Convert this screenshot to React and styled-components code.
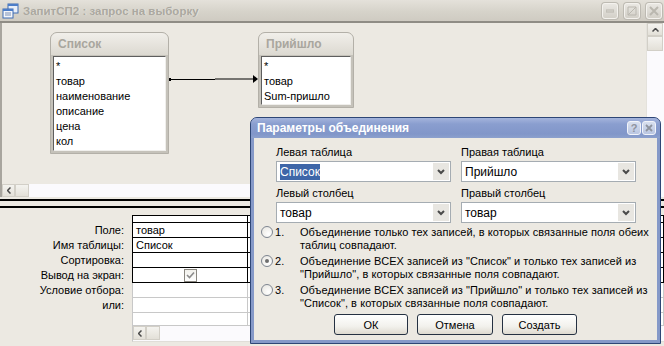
import React from 'react'
import styled, { createGlobalStyle, css } from 'styled-components'

const GlobalStyle = createGlobalStyle`
  html, body { margin: 0; padding: 0; }
  body {
    font-family: "Liberation Sans", Arial, sans-serif;
    font-size: 11px;
    color: #000;
    background: #ECE9E2;
  }
`

const Window = styled.div`
  position: relative;
  width: 664px;
  height: 346px;
  overflow: hidden;
  background: #ECE9E2;
  display: flex;
  flex-direction: column;
`

const TitleBar = styled.div`
  flex: none;
  height: 21px;
  display: flex;
  align-items: center;
  gap: 4px;
  padding: 0 2px 0 2px;
  background: linear-gradient(#E4E1DA, #D6D3CA 55%, #CFCBC2);
  border-bottom: 2px solid #8F8C85;
`

const TitleText = styled.div`
  flex: 1;
  font-size: 11.5px;
  font-weight: bold;
  color: #ABA8A0;
  text-shadow: 1px 0 0 #E6E4DE;
`

const CaptionButton = styled.div`
  width: 14px;
  height: 14px;
  border: 1px solid #F4F2EE;
  border-radius: 3px;
  background: linear-gradient(#E9E7E2, #D3D0C8);
  box-shadow: 0 0 0 1px #BDBAB2;
  display: flex;
  align-items: center;
  justify-content: center;
  margin-left: 2px;
`

const UpperPane = styled.div`
  flex: none;
  height: 161px;
  display: flex;
  border-left: 2px solid #A8A59E;
`

const Canvas = styled.div`
  position: relative;
  flex: 1;
`

const VScroll = styled.div`
  width: 17px;
  display: flex;
  flex-direction: column;
  background: #FBFAFD;
  border-left: 1px solid #E4E2DC;
`

const ScrollButton = styled.div`
  width: ${p => p.$w || 16}px;
  height: ${p => p.$h || 13}px;
  flex: none;
  background: linear-gradient(#F4F3EF, #E3E0D8);
  border: 1px solid #D2CFC7;
  box-sizing: border-box;
  display: flex;
  align-items: center;
  justify-content: center;
`

const HScroll = styled.div`
  flex: none;
  height: 13px;
  display: flex;
  background: #FBFAFD;
  border-left: 2px solid #A8A59E;
`

const Splitter = styled.div`
  flex: none;
  height: 5px;
  margin-top: 2px;
  border-top: 2px solid #000;
  border-bottom: 2px solid #000;
  background: #ECE9E2;
`

const TableBox = styled.div`
  position: absolute;
  left: ${p => p.$x}px;
  top: ${p => p.$y}px;
  width: ${p => p.$w}px;
  height: ${p => p.$h}px;
  box-sizing: border-box;
  border: 1px solid #B3B0A8;
  border-radius: 7px 7px 0 0;
  background: #C5C2BA;
  display: flex;
  flex-direction: column;
  padding: 0 2px 2px;
`

const TableHead = styled.div`
  height: 22px;
  margin: 0 -2px;
  border-radius: 6px 6px 0 0;
  background: linear-gradient(#F1EFEA, #DCD9D1);
  padding-left: 7px;
  line-height: 23px;
  font-size: 12px;
  font-weight: bold;
  color: #A9A69E;
  border-bottom: 1px solid #C5C2BA;
`

const FieldList = styled.div`
  flex: 1;
  background: #fff;
  border-top: 1px solid #5E5E5E;
  border-left: 1px solid #5E5E5E;
  border-right: 1px solid #F0EFEC;
  border-bottom: 1px solid #F0EFEC;
  padding: 2px 0 0 2px;
`

const FieldItem = styled.div`
  height: 15px;
  line-height: 15px;
  white-space: nowrap;
`

const LowerPane = styled.div`
  flex: 1;
  padding-top: 7px;
`

const GridRow = styled.div`
  display: flex;
  height: ${p => p.$h || 15}px;
`

const RowLabel = styled.div`
  width: 132px;
  box-sizing: border-box;
  padding-right: 8px;
  text-align: right;
  line-height: 15px;
  white-space: nowrap;
`

const GridCell = styled.div`
  box-sizing: border-box;
  width: ${p => (p.$w ? `${p.$w}px` : 'auto')};
  flex: ${p => (p.$w ? 'none' : 1)};
  background: #fff;
  border-bottom: 1px solid ${p => (p.$strong ? '#000' : '#C8C8C8')};
  border-right: 1px solid ${p => (p.$strong ? '#000' : '#C8C8C8')};
  padding-left: 3px;
  line-height: 14px;
  display: flex;
  align-items: center;
  ${p => p.$first && css`border-left: 1px solid ${p.$strong ? '#000' : '#C8C8C8'};`}
  ${p => p.$top && css`border-top: 1px solid #000;`}
  ${p => p.$center && css`justify-content: center; padding-left: 0;`}
`

const GridScroll = styled.div`
  display: flex;
  margin-left: 132px;
  height: 15px;
  background: #FBFAFD;
  border-left: 1px solid #C8C8C8;
  border-bottom: 1px solid #E0DED8;
`

const CheckBox = styled.div`
  width: 13px;
  height: 13px;
  box-sizing: border-box;
  border: 1px solid #8A8780;
  background: linear-gradient(#F2F1EC, #FFFFFF);
  display: flex;
  align-items: center;
  justify-content: center;
`

const Dialog = styled.div`
  position: absolute;
  left: 250px;
  top: 117px;
  width: 411px;
  height: 227px;
  box-sizing: border-box;
  border: 1px solid #2E4676;
  border-radius: 7px 7px 0 0;
  background: #8599C8;
  display: flex;
  flex-direction: column;
`

const DialogTitle = styled.div`
  flex: none;
  height: 20px;
  display: flex;
  align-items: center;
  padding: 0 4px 0 6px;
  border-radius: 6px 6px 0 0;
  background: linear-gradient(#A4B4DC, #8A9ECF 30%, #8196C9 80%, #8CA0CD);
  color: #fff;
  font-size: 12px;
  font-weight: bold;
`

const DialogCaption = styled.div`
  flex: 1;
`

const DialogButtonIcon = styled.div`
  width: 12px;
  height: 12px;
  border: 1px solid #F2F4FA;
  border-radius: 3px;
  background: linear-gradient(#D8DFEE, #BAC6E2);
  display: flex;
  align-items: center;
  justify-content: center;
  margin-left: 1px;
  color: #8E939E;
  font-size: 11px;
  font-weight: bold;
  line-height: 12px;
`

const DialogBody = styled.div`
  flex: 1;
  margin: 0 3px 3px;
  background: #ECE9E2;
  padding: 6px 0 0 7px;
  display: flex;
  flex-direction: column;
`

const FieldGrid = styled.div`
  display: grid;
  grid-template-columns: 175px 175px;
  column-gap: 10px;
  row-gap: 3px;
  margin-left: 15px;
`

const Field = styled.div`
  display: flex;
  flex-direction: column;
`

const FieldLabel = styled.div`
  height: 17px;
  line-height: 17px;
  font-size: 11px;
`

const Combo = styled.div`
  height: 21px;
  box-sizing: border-box;
  border: 1px solid #A5ACB2;
  background: #fff;
  display: flex;
  align-items: stretch;
  padding: 1px;
`

const ComboValue = styled.div`
  flex: 1;
  display: flex;
  align-items: center;
  padding-left: 2px;
  font-size: 12px;
`

const Selected = styled.span`
  background: ${p => (p.$on ? '#3E66A8' : 'transparent')};
  color: ${p => (p.$on ? '#fff' : '#000')};
  padding: 1px 0;
  line-height: 14px;
`

const ComboArrow = styled.div`
  width: 16px;
  background: #E8E6E1;
  display: flex;
  align-items: center;
  justify-content: center;
`

const Options = styled.div`
  margin-top: 3px;
  display: flex;
  flex-direction: column;
  gap: 3px;
`

const Option = styled.div`
  display: flex;
  align-items: flex-start;
  line-height: 13px;
  font-size: 11px;
`

const Radio = styled.div`
  flex: none;
  width: 12px;
  height: 12px;
  box-sizing: border-box;
  border-radius: 50%;
  border: 1px solid #7E8590;
  background: radial-gradient(circle at 65% 70%, #FFFFFF, #E6E4DE);
  display: flex;
  align-items: center;
  justify-content: center;
  &::after {
    content: '';
    width: 4px;
    height: 4px;
    border-radius: 50%;
    background: ${p => (p.$checked ? '#6E6E6E' : 'transparent')};
  }
`

const OptionNum = styled.div`
  width: 25px;
  flex: none;
  padding-left: 2px;
`

const OptionText = styled.div`
  white-space: nowrap;
  letter-spacing: 0.06px;
`

const ButtonRow = styled.div`
  display: flex;
  justify-content: center;
  gap: 9px;
  margin-top: 4px;
  padding-right: 7px;
`

const PushButton = styled.div`
  width: ${p => p.$w || 75}px;
  height: 21px;
  box-sizing: border-box;
  border: 1px solid #253142;
  border-radius: 3px;
  background: linear-gradient(#FFFFFF, #F2F1EC 60%, #DEDAD0);
  display: flex;
  align-items: center;
  justify-content: center;
  font-size: 11px;
`

const Chevron = () => (
  <svg width="8" height="6" viewBox="0 0 8 6">
    <path d="M1 1 L4 4 L7 1" fill="none" stroke="#4A4A4A" strokeWidth="2" />
  </svg>
)

const WindowIcon = () => (
  <svg width="17" height="16" viewBox="0 0 17 16">
    <rect x="6" y="1" width="10" height="9" fill="#E8EEF8" stroke="#3F6DB4" />
    <rect x="6" y="1" width="10" height="2" fill="#4C7DC8" />
    <rect x="1" y="6" width="10" height="9" fill="#F4F6FA" stroke="#3F6DB4" />
    <rect x="1" y="6" width="10" height="2" fill="#4C7DC8" />
    <path d="M3 10 H9 M3 12 H9" stroke="#7A8FB6" />
  </svg>
)

const lowerRows = [
  { label: 'Поле:', value: 'товар', strong: true },
  { label: 'Имя таблицы:', value: 'Список', strong: true },
  { label: 'Сортировка:', value: '', strong: true },
  { label: 'Вывод на экран:', check: true, strong: true },
  { label: 'Условие отбора:', value: '' },
  { label: 'или:', value: '' },
]

const options = [
  ['Объединение только тех записей, в которых связанные поля обеих', 'таблиц совпадают.'],
  ['Объединение ВСЕХ записей из "Список" и только тех записей из', '"Прийшло", в которых связанные поля совпадают.'],
  ['Объединение ВСЕХ записей из "Прийшло" и только тех записей из', '"Список", в которых связанные поля совпадают.'],
]

export default function App() {
  return (
    <>
      <GlobalStyle />
      <Window>
        <TitleBar>
          <WindowIcon />
          <TitleText>ЗапитСП2 : запрос на выборку</TitleText>
          <CaptionButton>
            <svg width="8" height="4"><rect x="0" y="1" width="8" height="2" fill="none" stroke="#B9B6AE" /></svg>
          </CaptionButton>
          <CaptionButton>
            <svg width="10" height="10"><path d="M1 9 L9 1 M1 1 H9 V9 H1 Z" fill="none" stroke="#BAB7AF" /></svg>
          </CaptionButton>
          <CaptionButton>
            <svg width="10" height="10"><path d="M1 1 L9 9 M9 1 L1 9" stroke="#BAB7AF" strokeWidth="2" /></svg>
          </CaptionButton>
        </TitleBar>

        <UpperPane>
          <Canvas>
            <TableBox $x={48} $y={9} $w={119} $h={122}>
              <TableHead>Список</TableHead>
              <FieldList>
                {['*', 'товар', 'наименование', 'описание', 'цена', 'кол'].map(f => (
                  <FieldItem key={f}>{f}</FieldItem>
                ))}
              </FieldList>
            </TableBox>
            <TableBox $x={256} $y={9} $w={96} $h={76}>
              <TableHead>Прийшло</TableHead>
              <FieldList>
                {['*', 'товар', 'Sum-пришло'].map(f => (
                  <FieldItem key={f}>{f}</FieldItem>
                ))}
              </FieldList>
            </TableBox>
            <svg width="100" height="12" style={{ position: 'absolute', left: 166, top: 51 }}>
              <rect x="1" y="4" width="2" height="3" fill="#000" />
              <path d="M2 5.5 H47 M47 5 H88" stroke="#000" />
              <path d="M85 1 L90 5 L85 9 Z" fill="#000" />
            </svg>
          </Canvas>
          <VScroll>
            <ScrollButton $h={13}>
              <svg width="7" height="4"><path d="M0.5 3.5 L3.5 0.5 L6.5 3.5" fill="none" stroke="#4A4A4A" strokeWidth="1.5" /></svg>
            </ScrollButton>
            <ScrollButton $h={15} />
          </VScroll>
        </UpperPane>

        <HScroll>
          <ScrollButton $w={13} $h={13}>
            <svg width="4" height="7"><path d="M3.5 0.5 L0.5 3.5 L3.5 6.5" fill="none" stroke="#4A4A4A" strokeWidth="1.5" /></svg>
          </ScrollButton>
          <ScrollButton $w={14} $h={13} />
        </HScroll>

        <Splitter />

        <LowerPane>
          <GridRow $h={8}>
            <RowLabel />
            <GridCell $w={116} $strong $first $top />
            <GridCell $strong $top />
          </GridRow>
          {lowerRows.map(r => (
            <GridRow key={r.label}>
              <RowLabel>{r.label}</RowLabel>
              <GridCell $w={116} $strong={r.strong} $first $center={r.check}>
                {r.check ? (
                  <CheckBox>
                    <svg width="9" height="8"><path d="M1 4 L3.5 6.5 L8 1.5" fill="none" stroke="#8C8C8C" strokeWidth="1.6" /></svg>
                  </CheckBox>
                ) : (
                  r.value
                )}
              </GridCell>
              <GridCell $strong={r.strong} />
            </GridRow>
          ))}
          <GridRow $h={13}>
            <RowLabel />
            <GridCell $w={116} $first />
            <GridCell />
          </GridRow>
          <GridScroll>
            <ScrollButton $w={13} $h={14}>
              <svg width="4" height="7"><path d="M3.5 0.5 L0.5 3.5 L3.5 6.5" fill="none" stroke="#4A4A4A" strokeWidth="1.5" /></svg>
            </ScrollButton>
            <ScrollButton $w={14} $h={14} />
          </GridScroll>
        </LowerPane>

        <Dialog>
          <DialogTitle>
            <DialogCaption>Параметры объединения</DialogCaption>
            <DialogButtonIcon>?</DialogButtonIcon>
            <DialogButtonIcon>
              <svg width="8" height="8"><path d="M1 1 L7 7 M7 1 L1 7" stroke="#8E939E" strokeWidth="1.8" /></svg>
            </DialogButtonIcon>
          </DialogTitle>
          <DialogBody>
            <FieldGrid>
              <Field>
                <FieldLabel>Левая таблица</FieldLabel>
                <Combo>
                  <ComboValue><Selected $on>Список</Selected></ComboValue>
                  <ComboArrow><Chevron /></ComboArrow>
                </Combo>
              </Field>
              <Field>
                <FieldLabel>Правая таблица</FieldLabel>
                <Combo>
                  <ComboValue><Selected>Прийшло</Selected></ComboValue>
                  <ComboArrow><Chevron /></ComboArrow>
                </Combo>
              </Field>
              <Field>
                <FieldLabel>Левый столбец</FieldLabel>
                <Combo>
                  <ComboValue><Selected>товар</Selected></ComboValue>
                  <ComboArrow><Chevron /></ComboArrow>
                </Combo>
              </Field>
              <Field>
                <FieldLabel>Правый столбец</FieldLabel>
                <Combo>
                  <ComboValue><Selected>товар</Selected></ComboValue>
                  <ComboArrow><Chevron /></ComboArrow>
                </Combo>
              </Field>
            </FieldGrid>
            <Options>
              {options.map((lines, i) => (
                <Option key={i}>
                  <Radio $checked={i === 1} />
                  <OptionNum>{i + 1}.</OptionNum>
                  <OptionText>
                    {lines[0]}
                    <br />
                    {lines[1]}
                  </OptionText>
                </Option>
              ))}
            </Options>
            <ButtonRow>
              <PushButton $w={74}>ОК</PushButton>
              <PushButton $w={76}>Отмена</PushButton>
              <PushButton $w={75}>Создать</PushButton>
            </ButtonRow>
          </DialogBody>
        </Dialog>
      </Window>
    </>
  )
}
